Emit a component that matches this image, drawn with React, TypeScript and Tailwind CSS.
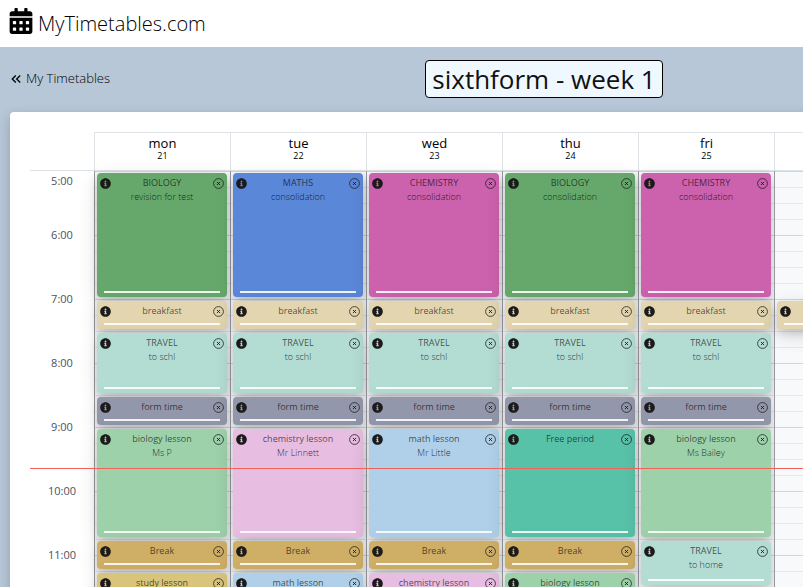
import React from 'react';
import { FaCalendarAlt, FaInfoCircle } from 'react-icons/fa';
import { MdKeyboardDoubleArrowLeft } from 'react-icons/md';

interface TimetableEvent {
  title: string;
  note?: string;
  start: number; // hours
  end: number;
  color: string;
}

interface Day {
  name: string;
  date: string;
  events: TimetableEvent[];
}

const FIRST_HOUR = 5;
const SLOTS_PER_HOUR = 4;
const HOURS = ['5:00', '6:00', '7:00', '8:00', '9:00', '10:00', '11:00'];

const GREEN = '#66a86b';
const BLUE = '#5b87d8';
const PINK = '#cc61ad';
const SAND = '#e2d5b0';
const MINT = '#b3dcd3';
const SLATE = '#9297ab';
const LIGHT_GREEN = '#9dd1aa';
const LIGHT_PINK = '#e7bde1';
const LIGHT_BLUE = '#b0d0ea';
const TEAL = '#58c2a9';
const GOLD = '#cfae66';
const YELLOW = '#d8c47a';

const breakfast: TimetableEvent = { title: 'breakfast', start: 7, end: 7.5, color: SAND };
const travel: TimetableEvent = { title: 'TRAVEL', note: 'to schl', start: 7.5, end: 8.5, color: MINT };
const formTime: TimetableEvent = { title: 'form time', start: 8.5, end: 9, color: SLATE };
const breakTime: TimetableEvent = { title: 'Break', start: 10.75, end: 11.25, color: GOLD };

const DAYS: Day[] = [
  {
    name: 'mon',
    date: '21',
    events: [
      { title: 'BIOLOGY', note: 'revision for test', start: 5, end: 7, color: GREEN },
      breakfast,
      travel,
      formTime,
      { title: 'biology lesson', note: 'Ms P', start: 9, end: 10.75, color: LIGHT_GREEN },
      breakTime,
      { title: 'study lesson', start: 11.25, end: 12, color: YELLOW },
    ],
  },
  {
    name: 'tue',
    date: '22',
    events: [
      { title: 'MATHS', note: 'consolidation', start: 5, end: 7, color: BLUE },
      breakfast,
      travel,
      formTime,
      { title: 'chemistry lesson', note: 'Mr Linnett', start: 9, end: 10.75, color: LIGHT_PINK },
      breakTime,
      { title: 'math lesson', start: 11.25, end: 12, color: LIGHT_BLUE },
    ],
  },
  {
    name: 'wed',
    date: '23',
    events: [
      { title: 'CHEMISTRY', note: 'consolidation', start: 5, end: 7, color: PINK },
      breakfast,
      travel,
      formTime,
      { title: 'math lesson', note: 'Mr Little', start: 9, end: 10.75, color: LIGHT_BLUE },
      breakTime,
      { title: 'chemistry lesson', start: 11.25, end: 12, color: LIGHT_PINK },
    ],
  },
  {
    name: 'thu',
    date: '24',
    events: [
      { title: 'BIOLOGY', note: 'consolidation', start: 5, end: 7, color: GREEN },
      breakfast,
      travel,
      formTime,
      { title: 'Free period', start: 9, end: 10.75, color: TEAL },
      breakTime,
      { title: 'biology lesson', start: 11.25, end: 12, color: LIGHT_GREEN },
    ],
  },
  {
    name: 'fri',
    date: '25',
    events: [
      { title: 'CHEMISTRY', note: 'consolidation', start: 5, end: 7, color: PINK },
      breakfast,
      travel,
      formTime,
      { title: 'biology lesson', note: 'Ms Bailey', start: 9, end: 10.75, color: LIGHT_GREEN },
      { title: 'TRAVEL', note: 'to home', start: 10.75, end: 11.5, color: MINT },
    ],
  },
  { name: '', date: '', events: [{ title: '', start: 7, end: 7.5, color: SAND }] },
  { name: '', date: '', events: [] },
];

const toRow = (hour: number) => (hour - FIRST_HOUR) * SLOTS_PER_HOUR + 1;

const CloseIcon = () => (
  <svg width="11" height="11" viewBox="0 0 22 22" fill="none" stroke="currentColor">
    <circle cx="11" cy="11" r="9.8" strokeWidth="1.5" />
    <path d="M7.9 7.9l6.2 6.2M14.1 7.9l-6.2 6.2" strokeWidth="1.8" />
  </svg>
);

const EventCard: React.FC<{ event: TimetableEvent }> = ({ event }) => (
  <div className="py-0.5 pr-[3px] pl-0.5" style={{ gridRow: `${toRow(event.start)} / ${toRow(event.end)}` }}>
    <div
      className="flex h-full flex-col justify-between rounded-sm px-[3px] pb-1 shadow-[0_4px_8px_rgba(0,0,0,0.14),0_6px_20px_rgba(0,0,0,0.14)]"
      style={{ backgroundColor: event.color }}
    >
      <div className="flex items-start justify-between">
        <button className="pt-[5px] text-[#1c1a1a]">
          <FaInfoCircle size={11} />
        </button>
        <div className="pt-1 text-center text-[9px] text-black/65">
          <p className="leading-3">{event.title}</p>
          {event.note && <p className="pt-0.5 leading-3 font-light text-black/80">{event.note}</p>}
        </div>
        <button className="pt-[5px] text-[#1c1a1a]">
          <CloseIcon />
        </button>
      </div>
      <div className="mx-1 h-0.5 shrink-0 bg-white/90" />
    </div>
  </div>
);

export default function App() {
  return (
    <div className="h-screen overflow-hidden bg-[#b7c7d7] font-['Open_Sans',sans-serif] text-black">
      <div className="min-w-[1088px]">
        <header className="flex h-[47px] items-start gap-1 bg-white px-2 pt-2">
          <FaCalendarAlt size={26} />
          <span className="text-xl leading-8 font-light">MyTimetables.com</span>
        </header>

        <div className="grid grid-cols-[1fr_auto_1fr] items-center px-2 pt-[13px] pb-[14px]">
          <a href="#" className="flex items-center gap-0.5 text-[13px] font-light">
            <MdKeyboardDoubleArrowLeft size={16} />
            My Timetables
          </a>
          <h1 className="rounded-sm border border-black bg-[#f0f8ff] px-1.5 text-[26px] leading-9 text-[#111]">
            sixthform - week 1
          </h1>
        </div>

        <main className="mx-2.5 rounded bg-white pt-5 pr-8 pl-5 shadow-[0_4px_12px_rgba(0,0,0,0.2)]">
          <div className="flex pl-16">
            {DAYS.map((day, i) => (
              <div
                key={i}
                className="h-[38px] min-w-0 flex-1 border-t border-l border-[#dfe2e7] pt-0.5 text-center"
              >
                <p className="text-[13px] leading-4">{day.name}</p>
                <p className="text-[9px] leading-2.5">{day.date}</p>
              </div>
            ))}
          </div>

          <div className="relative flex border-t border-[#dfe2e7]">
            <div className="w-16 text-center text-[11px] leading-5 text-[#4a5260]">
              {HOURS.map((hour) => (
                <p key={hour} className="h-16 first:h-[54px]">
                  {hour}
                </p>
              ))}
            </div>
            {DAYS.map((day, i) => (
              <div
                key={i}
                className="grid min-w-0 flex-1 auto-rows-[16px] content-start border-l border-[#97999e] bg-[#f8f9fb] bg-[repeating-linear-gradient(to_bottom,#d3d6e0_0_1px,transparent_1px_64px),repeating-linear-gradient(to_bottom,#e6e8ec_0_1px,transparent_1px_16px)]"
              >
                {day.events.map((event) => (
                  <EventCard key={event.start} event={event} />
                ))}
              </div>
            ))}
            <div className="absolute -right-8 left-0 top-[297px] h-px bg-[#f0625a]" />
          </div>
        </main>
      </div>
    </div>
  );
}
